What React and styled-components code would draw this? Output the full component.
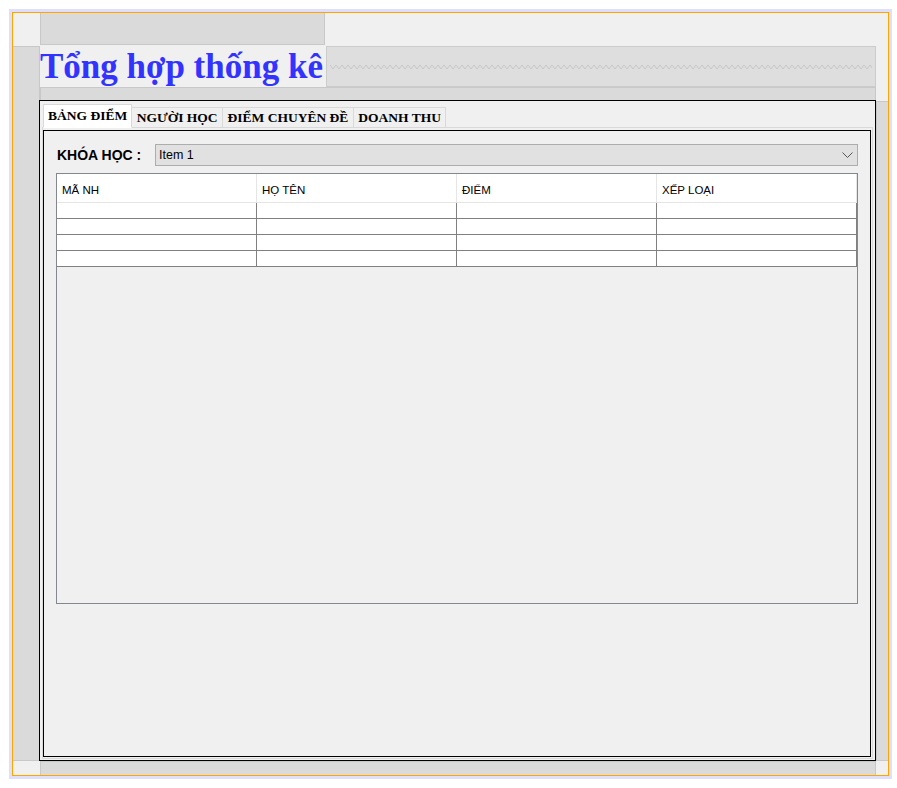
import React from "react";
import styled, { createGlobalStyle } from "styled-components";

const tabs = ["BẢNG ĐIỂM", "NGƯỜI HỌC", "ĐIỂM CHUYÊN ĐỀ", "DOANH THU"];
const columns = ["MÃ NH", "HỌ TÊN", "ĐIỂM", "XẾP LOẠI"];
const rows = [0, 1, 2, 3];

function App() {
  return (
    <>
      <GlobalStyle />
      <StPage>
        <StHalo>
          <StFrame>
            <StTopGap />
            <StLeftGap />
            <StTitleRow>
              <StTitle>Tổng hợp thống kê</StTitle>
              <StTitleGap>
                <svg width="100%" height="6">
                  <defs>
                    <pattern id="zz" width="6" height="6" patternUnits="userSpaceOnUse">
                      <polyline points="0,1 3,5 6,1" fill="none" stroke="#c6c6c6" strokeWidth="1" />
                    </pattern>
                  </defs>
                  <rect width="100%" height="6" fill="url(#zz)" />
                </svg>
              </StTitleGap>
            </StTitleRow>
            <StStrip />
            <StTabPane>
              <StTabRow>
                {tabs.map((t, i) => (
                  <StTab key={t} $active={i === 0}>
                    {t}
                  </StTab>
                ))}
              </StTabRow>
              <StPanel>
                <StSelected>
                  <StComboRow>
                    <StLabel>KHÓA HỌC :</StLabel>
                    <StCombo>
                      <span>Item 1</span>
                      <svg width="11" height="7" viewBox="0 0 11 7">
                        <polyline points="0.5,0.5 5.5,5.5 10.5,0.5" fill="none" stroke="#555" strokeWidth="1" />
                      </svg>
                    </StCombo>
                  </StComboRow>
                  <StTable>
                    <StHeadRow>
                      {columns.map((c) => (
                        <StHeadCell key={c}>{c}</StHeadCell>
                      ))}
                    </StHeadRow>
                    {rows.map((r) => (
                      <StBodyRow key={r}>
                        {columns.map((c) => (
                          <StCell key={c} />
                        ))}
                      </StBodyRow>
                    ))}
                  </StTable>
                </StSelected>
              </StPanel>
            </StTabPane>
            <StRightGap />
            <StBottomGap />
          </StFrame>
        </StHalo>
      </StPage>
    </>
  );
}

export default App;

const GlobalStyle = createGlobalStyle`
  html, body {
    margin: 0;
    padding: 0;
    background: #ffffff;
  }
  body {
    font-family: "Liberation Sans", Arial, sans-serif;
  }
  * {
    box-sizing: border-box;
  }
`;

const StPage = styled.div`
  padding: 9px 0 0 9px;
`;

const StHalo = styled.div`
  width: 883px;
  height: 770px;
  padding: 3px;
  background-color: #dfdffb;
`;

const StFrame = styled.div`
  height: 100%;
  display: grid;
  grid-template-columns: 27px 836px 1fr;
  grid-template-rows: 33px 41px 13px 661px 1fr;

  background-color: #f0f0f0;
  border: 1px solid #ffa500;
`;

const StGapBox = styled.div`
  background-color: #dadada;
  border: 1px solid #c8c8c8;
`;

const StTopGap = styled(StGapBox)`
  grid-column: 2;
  grid-row: 1;
  width: 285px;
  height: 32px;
  border-top: none;
`;

const StLeftGap = styled(StGapBox)`
  grid-column: 1;
  grid-row: 2 / 5;
  border-left: none;
`;

const StTitleRow = styled.div`
  grid-column: 2 / 4;
  grid-row: 2;
  display: flex;
  align-items: stretch;
`;

const StTitle = styled.div`
  width: 286px;
  display: flex;
  align-items: center;

  font-family: "Liberation Serif", "Times New Roman", serif;
  font-weight: 700;
  font-size: 35px;
  line-height: 1;
  color: #3333ff;
  white-space: nowrap;
`;

const StTitleGap = styled(StGapBox)`
  width: 550px;
  display: flex;
  align-items: center;
  padding: 0 3px;
  background-color: #dedede;
  border-color: #cccccc;
`;

const StStrip = styled(StGapBox)`
  grid-column: 2;
  grid-row: 3;
  border-bottom: none;
`;

const StRightGap = styled(StGapBox)`
  grid-column: 3;
  grid-row: 4;
  margin-top: 1px;
  border-right: none;
`;

const StBottomGap = styled(StGapBox)`
  grid-column: 2;
  grid-row: 5;
  border-bottom: none;
`;

const StTabPane = styled.div`
  grid-column: 2;
  grid-row: 4;
  margin-left: -1px;
  display: flex;
  flex-direction: column;

  background-color: #f0f0f0;
  border: 1px solid #000000;
`;

const StTabRow = styled.div`
  height: 26px;
  display: flex;
  align-items: flex-end;
  padding-left: 3px;
`;

const StTab = styled.div`
  height: ${(p) => (p.$active ? "24px" : "21px")};
  display: flex;
  align-items: center;
  padding: 0 ${(p) => (p.$active ? "4px" : "4.5px")};
  margin-bottom: -1px;

  font-family: "Liberation Serif", "Times New Roman", serif;
  font-weight: 700;
  font-size: 13.5px;
  color: #000000;
  white-space: nowrap;

  background-color: ${(p) => (p.$active ? "#ffffff" : "#f0f0f0")};
  border: 1px solid #d9d9d9;
  border-left: ${(p) => (p.$active ? "1px solid #d9d9d9" : "none")};
  border-bottom: ${(p) => (p.$active ? "1px solid #ffffff" : "1px solid #d9d9d9")};
  position: relative;
  z-index: ${(p) => (p.$active ? 1 : 0)};
`;

const StPanel = styled.div`
  flex: 1;
  display: flex;
  margin: 0 2px 1px 2px;
  padding: 2px 1px 1px 0;

  border: 1px solid #d9d9d9;
`;

const StSelected = styled.div`
  flex: 1;
  display: flex;
  flex-direction: column;
  padding: 13px 12px 0 12px;

  border: 1px solid #000000;
`;

const StComboRow = styled.div`
  display: flex;
  align-items: center;
  gap: 12px;
  margin-bottom: 7px;
`;

const StLabel = styled.div`
  width: 87px;
  padding-left: 1px;

  font-weight: 700;
  font-size: 14px;
  color: #000000;
  white-space: nowrap;
`;

const StCombo = styled.div`
  flex: 1;
  height: 22px;
  display: flex;
  align-items: center;
  justify-content: space-between;
  padding: 0 4px 0 3px;

  font-size: 12.5px;
  color: #000000;

  background-color: #e1e1e1;
  border: 1px solid #adadad;
`;

const StTable = styled.div`
  width: 802px;
  height: 431px;

  background-color: #f0f0f0;
  border: 1px solid #828790;
`;

const StHeadRow = styled.div`
  display: grid;
  grid-template-columns: repeat(4, 200px);
  background-color: #ffffff;
`;

const StHeadCell = styled.div`
  height: 29px;
  display: flex;
  align-items: center;
  padding: 3px 0 0 5px;

  font-size: 11.5px;
  color: #000000;

  border-right: 1px solid #e5e5e5;
  border-bottom: 1px solid #e5e5e5;
`;

const StBodyRow = styled.div`
  display: grid;
  grid-template-columns: repeat(4, 200px);
  background-color: #ffffff;
`;

const StCell = styled.div`
  height: 16px;
  border-right: 1px solid #808080;
  border-bottom: 1px solid #808080;
`;
